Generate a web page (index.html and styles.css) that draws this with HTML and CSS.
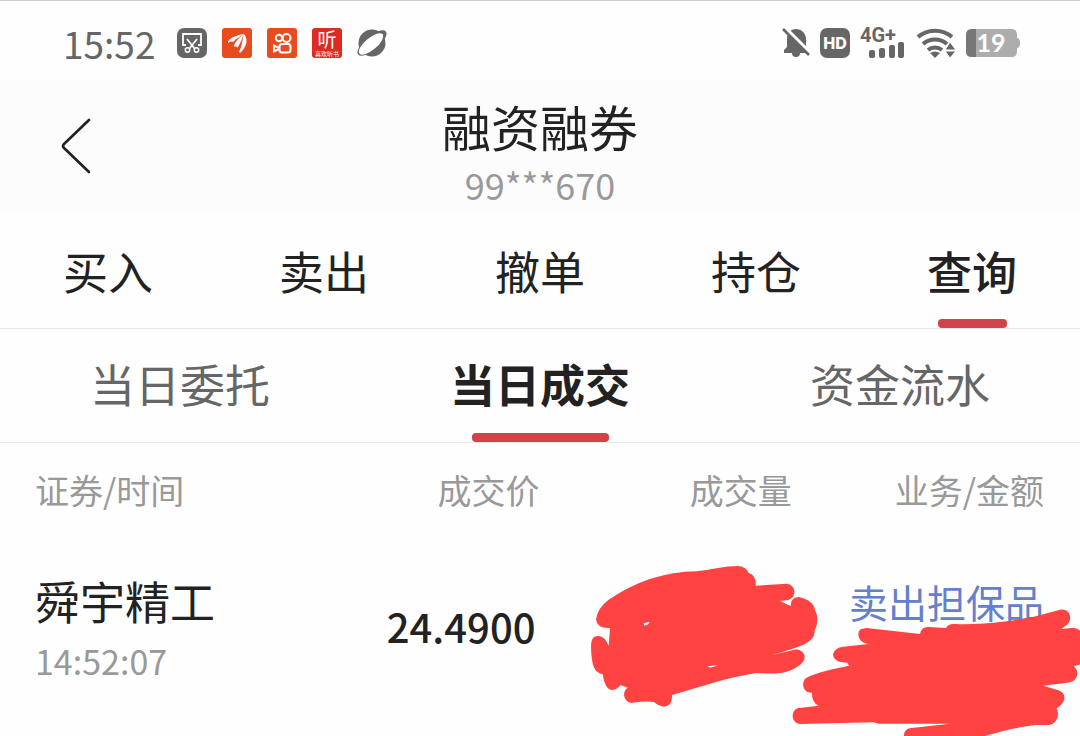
FILE: index.html
```
<!DOCTYPE html>
<html lang="zh-CN">
<head>
    <meta charset="UTF-8">
    <meta name="viewport" content="width=device-width, initial-scale=1.0">
    <title>融资融券</title>
    <link rel="stylesheet" href="styles.css">
</head>
<body>
    <div class="status-bar">
        <div class="status-left">
            <span class="clock">15:52</span>
            <svg class="app-icon" viewBox="0 0 30 30">
                <rect width="30" height="30" rx="7" fill="#666"/>
                <path d="M9 17H6V6h18v11h-3" fill="none" stroke="#fff" stroke-width="1.8"/>
                <path d="M10 11l8 10M20 11l-8 10" stroke="#fff" stroke-width="1.8"/>
                <circle cx="10.500" cy="22" r="2.200" fill="none" stroke="#fff" stroke-width="1.500"/>
                <circle cx="19.500" cy="22" r="2.200" fill="none" stroke="#fff" stroke-width="1.500"/>
            </svg>
            <svg class="app-icon" viewBox="0 0 30 30">
                <rect width="30" height="30" rx="3" fill="#e84c1e"/>
                <path d="M6 15C6 11 12 8 22 6C17 8 14 11 11 14C9 13 7 14 6 15zM12 19C12 14 17 10 22 6C20 10 19 15 15 20C15 18 13 18 12 19zM17 24C20 19 20 12 22 6C27 12 24 20 18 25z" fill="#fff"/>
                <path d="M6 15C6 11 12 8 22 6L16 10C12 11 8 13 6 15z" fill="#fff"/>
            </svg>
            <svg class="app-icon" viewBox="0 0 30 30">
                <rect width="30" height="30" rx="3" fill="#e84c1e"/>
                <g fill="none" stroke="#fff" stroke-width="2">
                    <circle cx="12" cy="10" r="3.200"/>
                    <circle cx="19.500" cy="10" r="4"/>
                    <rect x="12.500" y="16" width="11" height="8.500" rx="2.500"/>
                    <path d="M12 20l-5-2.500v6l5-2.500"/>
                </g>
            </svg>
            <svg class="app-icon" viewBox="0 0 30 30">
                <rect width="30" height="30" rx="3" fill="#dd2a22"/>
                <text class="icon-main" x="15" y="19" text-anchor="middle">听</text>
                <text class="icon-sub" x="15" y="28" text-anchor="middle">喜欢听书</text>
            </svg>
            <svg class="app-icon" viewBox="0 0 30 30">
                <circle cx="15" cy="15" r="13.500" fill="#666"/>
                <ellipse cx="15" cy="15" rx="18" ry="7" transform="rotate(-40 15 15)" fill="#666"/>
                <ellipse cx="14" cy="16" rx="15" ry="6" transform="rotate(-40 14 16)" fill="#fff"/>
            </svg>
        </div>
        <div class="status-right">
            <svg class="bell" viewBox="0 0 28 32">
                <path d="M2 26v-3l3-3v-8C5 6 9 2 14 2s10 4 10 10v8l3 3v3h-9a4 4 0 0 1-8 0z" fill="#666"/>
                <path d="M2 0l26 26" stroke="#fff" stroke-width="4"/>
                <path d="M1 2l26 26" stroke="#666" stroke-width="2.600"/>
            </svg>
            <svg class="app-icon" viewBox="0 0 30 30">
                <rect width="30" height="30" rx="7" fill="#666"/>
                <text class="icon-hd" x="15" y="21" text-anchor="middle">HD</text>
            </svg>
            <svg class="signal" viewBox="0 0 46 34">
                <text class="icon-net" x="0" y="16">4G+</text>
                <g fill="#666">
                    <rect x="9" y="24" width="6" height="8" rx="2"/>
                    <rect x="19" y="22" width="6" height="10" rx="2"/>
                    <rect x="29" y="19" width="6" height="13" rx="2"/>
                    <rect x="38" y="16" width="6" height="16" rx="2"/>
                </g>
            </svg>
            <svg class="wifi" viewBox="0 0 40 32">
                <g fill="none" stroke="#666" stroke-width="4">
                    <path d="M2 10a26 26 0 0 1 34 0"/>
                    <path d="M7 17a18 18 0 0 1 24 0"/>
                    <path d="M12 23a11 11 0 0 1 14 0"/>
                </g>
                <path d="M14 26q5-3 10 0l-5 5z" fill="#666"/>
                <path d="M29 23l5-8 6 8zM29 24h11l-6 7z" fill="#666" stroke="#fff" stroke-width="1"/>
            </svg>
            <svg class="battery" viewBox="0 0 54 28">
                <path d="M6 0h40q5 0 5 6v3q3 0 3 5t-3 5v3q0 6-5 6H6q-6 0-6-6V6q0-6 6-6z" fill="#adadad"/>
                <path d="M10 0v28H6q-6 0-6-6V6q0-6 6-6z" fill="#777"/>
                <text class="icon-power" x="25" y="23" text-anchor="middle">19</text>
            </svg>
        </div>
    </div>

    <header class="header">
        <button class="back" type="button" aria-label="返回">
            <svg viewBox="0 0 32 56">
                <path d="M29 2L4 26q-2 2 0 4l25 24" fill="none" stroke="#222" stroke-width="2.600" stroke-linecap="round"/>
            </svg>
        </button>
        <div class="heading">
            <h1>融资融券</h1>
            <p class="account">99***670</p>
        </div>
    </header>

    <nav class="tabs">
        <a href="#buy">买入</a>
        <a href="#sell">卖出</a>
        <a href="#cancel">撤单</a>
        <a href="#position">持仓</a>
        <a href="#query" class="active">查询</a>
    </nav>

    <nav class="tabs sub-tabs">
        <a href="#orders">当日委托</a>
        <a href="#deals" class="active">当日成交</a>
        <a href="#funds">资金流水</a>
    </nav>

    <main class="deals">
        <table>
            <thead>
                <tr>
                    <th>证券/时间</th>
                    <th>成交价</th>
                    <th>成交量</th>
                    <th>业务/金额</th>
                </tr>
            </thead>
            <tbody>
                <tr>
                    <td>
                        <div class="name">舜宇精工</div>
                        <div class="time">14:52:07</div>
                    </td>
                    <td class="price">24.4900</td>
                    <td>
                        <svg class="scribble volume" viewBox="0 0 750 528">
                            <path d="M85 120Q210 35 350 34C400 28 430 18 475 18Q498 20 505 38Q530 45 527 77L620 71C650 75 650 112 625 120L600 123L632 138Q632 112 655 111Q700 120 705 150Q720 180 704 212C704 250 660 260 575 285L650 268C680 275 680 300 660 315C620 345 580 342 530 339C440 352 350 385 276 405Q278 438 252 440Q235 438 222 426Q200 422 155 429C130 425 125 395 143 383L122 375Q110 390 95 390Q75 388 68 342Q42 340 36 300Q28 240 42 231C65 220 80 240 86 258L90 204Q50 206 48 178Q52 145 85 120Z" fill="#ff4242"/>
                            <path d="M191 190l18-5-4 8-12 4zM382 319l34-4-25 8z" fill="#fff"/>
                        </svg>
                    </td>
                    <td class="business">
                        卖出担保品
                        <svg class="scribble amount" viewBox="0 0 870 498">
                            <path d="M230 174L390 192Q394 170 415 171L468 174Q475 160 495 162C600 166 690 148 740 138L810 119C842 112 852 155 825 169L814 177L850 173Q870 175 880 195V280L852 289Q868 305 858 325Q850 338 825 339L760 347L800 359C830 365 832 395 800 415C812 440 795 465 775 465L735 465C660 475 610 492 570 502H342Q340 475 365 474L480 461L265 461L250 457L30 462C5 460 0 425 22 415L86 407Q65 400 66 368C40 370 32 340 47 325C80 305 130 298 177 287L172 278Q130 278 129 252Q135 232 160 230L235 222C205 218 198 190 212 178Z" fill="#ff4242"/>
                        </svg>
                    </td>
                </tr>
            </tbody>
        </table>
    </main>
</body>
</html>
```
FILE: styles.css
```
* {
    box-sizing: border-box;
}

body {
    margin: 0;
    min-height: 100vh;
    display: flex;
    flex-direction: column;
    background-color: #fefefe;
    color: #222;
    font-family: "Noto Sans CJK SC", sans-serif;
}

svg {
    display: block;
    overflow: visible;
}

.status-bar {
    display: flex;
    justify-content: space-between;
    align-items: center;
    height: 80px;
    padding: 4px 60px 0 63px;
    border-top: 1px solid #ccc;
}

.status-left {
    display: flex;
    align-items: center;
    gap: 15px;
}

.status-right {
    display: flex;
    align-items: center;
    gap: 10px;
}

.clock {
    color: #666;
    font-size: 37px;
    line-height: 40px;
    margin-right: 7px;
}

.app-icon {
    width: 30px;
    height: 30px;
}

.bell {
    width: 28px;
    height: 32px;
}

.signal {
    width: 46px;
    height: 34px;
}

.wifi {
    width: 40px;
    height: 32px;
}

.battery {
    width: 54px;
    height: 28px;
}

.icon-main {
    fill: #fff;
    font-size: 19px;
}

.icon-sub {
    fill: #fff;
    font-size: 6px;
}

.icon-hd {
    fill: #fff;
    font-family: Inter, sans-serif;
    font-size: 16px;
    font-weight: 800;
}

.icon-net {
    fill: #666;
    font-family: Roboto, sans-serif;
    font-size: 20px;
    font-weight: bold;
}

.icon-power {
    fill: #fff;
    font-family: Lato, sans-serif;
    font-size: 25px;
    font-weight: bold;
}

.header {
    display: grid;
    grid-template-columns: 1fr auto 1fr;
    align-items: center;
    height: 132px;
    background-color: #fcfcfc;
}

.back {
    justify-self: start;
    margin-left: 60px;
    padding: 0;
    border: none;
    background: none;
    cursor: pointer;
}

.back svg {
    width: 32px;
    height: 56px;
}

.heading {
    padding-top: 12px;
    text-align: center;
}

h1 {
    margin: 0;
    font-size: 49px;
    font-weight: normal;
    line-height: 64px;
}

.account {
    margin: 0;
    color: #999;
    font-size: 36px;
    line-height: 52px;
}

.tabs {
    display: flex;
    height: 117px;
    border-bottom: 1px solid #e8e8e8;
}

.tabs a {
    flex: 1;
    display: flex;
    flex-direction: column;
    justify-content: space-between;
    align-items: center;
    padding-top: 27px;
    color: #222;
    font-size: 45px;
    line-height: 64px;
    text-decoration: none;
}

.tabs .active {
    font-weight: 500;
}

.tabs .active::after {
    content: "";
    width: 69px;
    height: 9px;
    border-radius: 4px;
    background-color: #d04348;
}

.sub-tabs {
    height: 114px;
}

.sub-tabs a {
    padding-top: 23px;
    color: #666;
}

.sub-tabs .active {
    color: #222;
    font-weight: bold;
}

.sub-tabs .active::after {
    width: 137px;
}

.deals {
    flex: 1;
    padding: 0 36px 0 35px;
    overflow: hidden;
}

table {
    width: 100%;
    table-layout: fixed;
    border-collapse: collapse;
}

th {
    height: 96px;
    padding: 0 0 4px;
    color: #999;
    font-size: 34px;
    font-weight: normal;
    text-align: right;
}

td {
    position: relative;
    padding: 32px 0 36px;
    text-align: right;
    vertical-align: top;
}

th:first-child,
td:first-child {
    text-align: left;
}

.name {
    font-size: 45px;
    line-height: 60px;
}

.time {
    color: #999;
    font-size: 34px;
    line-height: 60px;
}

.price {
    padding: 26px 4px 40px 0;
    font-size: 40px;
    font-weight: 500;
    line-height: 60px;
    vertical-align: middle;
}

.business {
    color: #6480cc;
    font-size: 39px;
    line-height: 60px;
    white-space: nowrap;
}

/* marker strokes hiding the volume and amount */
.scribble {
    position: absolute;
}

.volume {
    top: 21px;
    right: -38px;
    width: 250px;
    height: 176px;
}

.amount {
    top: 31px;
    right: -36px;
    width: 290px;
    height: 166px;
}
```
